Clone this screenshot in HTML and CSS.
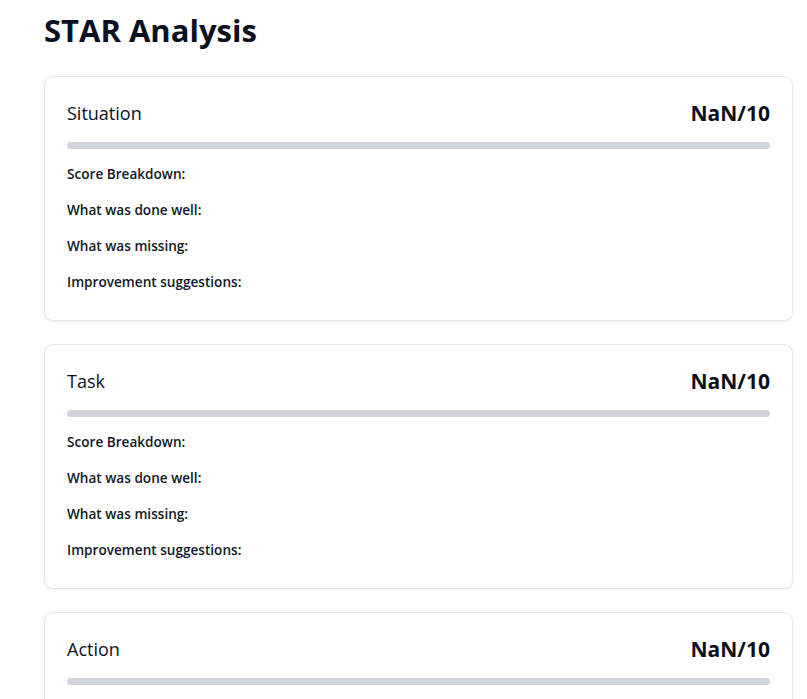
FILE: index.html
```html
<!DOCTYPE html>
<html lang="en">
<head>
<meta charset="utf-8">
<title>STAR Analysis</title>
<link rel="stylesheet" href="styles.css">
</head>
<body>
<main class="page">
  <h1 class="title">STAR Analysis</h1>
  <div class="cards">
    <section class="card">
      <div class="card-head">
        <h2 class="card-name">Situation</h2>
        <span class="score">NaN/10</span>
      </div>
      <div class="bar"></div>
      <ul class="details">
        <li>Score Breakdown:</li>
        <li>What was done well:</li>
        <li>What was missing:</li>
        <li>Improvement suggestions:</li>
      </ul>
    </section>
    <section class="card">
      <div class="card-head">
        <h2 class="card-name">Task</h2>
        <span class="score">NaN/10</span>
      </div>
      <div class="bar"></div>
      <ul class="details">
        <li>Score Breakdown:</li>
        <li>What was done well:</li>
        <li>What was missing:</li>
        <li>Improvement suggestions:</li>
      </ul>
    </section>
    <section class="card">
      <div class="card-head">
        <h2 class="card-name">Action</h2>
        <span class="score">NaN/10</span>
      </div>
      <div class="bar"></div>
      <ul class="details">
        <li>Score Breakdown:</li>
        <li>What was done well:</li>
        <li>What was missing:</li>
        <li>Improvement suggestions:</li>
      </ul>
    </section>
  </div>
</main>
</body>
</html>
```
FILE: styles.css
```css
html, body {
  margin: 0;
  padding: 0;
  background: #ffffff;
}
body {
  font-family: "Open Sans", "Noto Sans", sans-serif;
  color: #0f172a;
}
.page {
  padding: 8px 14px 0 44px;
}
.title {
  margin: 0 0 24px 0;
  font-size: 31px;
  line-height: 44px;
  font-weight: 700;
  color: #0b1021;
}
.cards {
  display: flex;
  flex-direction: column;
  gap: 23px;
}
.card {
  border: 1px solid #e3e8ef;
  border-radius: 9px;
  box-shadow: 0 1px 3px rgba(15, 23, 42, 0.08);
  padding: 20px 22px 28px 22px;
  background: #fff;
}
.card-head {
  display: flex;
  justify-content: space-between;
  align-items: center;
  height: 32px;
}
.card-name {
  margin: 0;
  font-size: 18px;
  font-weight: 500;
  color: #0b1021;
}
.score {
  font-size: 21px;
  font-weight: 700;
  color: #0b1021;
}
.bar {
  margin-top: 13px;
  height: 7px;
  border-radius: 4px;
  background: #d1d5db;
}
.details {
  list-style: none;
  margin: 15px 0 0 0;
  padding: 0;
  display: flex;
  flex-direction: column;
  gap: 16px;
}
.details li {
  font-size: 13.6px;
  line-height: 20px;
  font-weight: 600;
  color: #111827;
}
```
